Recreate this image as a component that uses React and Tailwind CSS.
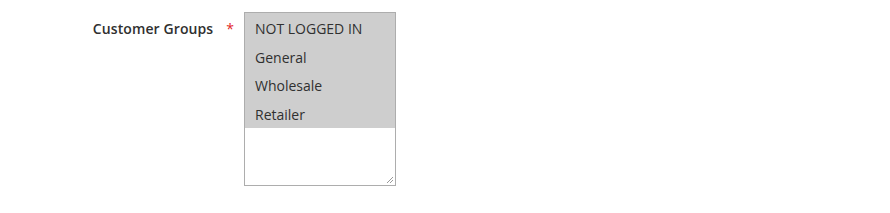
export default function App() {
  const groups = ['NOT LOGGED IN', 'General', 'Wholesale', 'Retailer'];

  return (
    <div className="w-[890px] h-[213px] bg-white pt-3 font-['Open_Sans',sans-serif] text-[14px] text-[#303030]">
      <div className="flex items-start">
        {/* Label */}
        <div className="w-[244px] flex justify-end pr-[10px] pt-[7px]">
          <label className="font-semibold leading-[19px] tracking-[0.1px]">Customer Groups</label>
          <span className="ml-[13px] text-[#e22626] leading-[19px]">*</span>
        </div>

        {/* Multiselect */}
        <div className="relative w-[152px] h-[174px] border border-[#adadad] bg-white">
          {groups.map((g) => (
            <div key={g} className="h-[28.75px] flex items-center pt-[3px] px-[10px] bg-[#cecece] leading-none">
              {g}
            </div>
          ))}
          <svg className="absolute right-[1px] bottom-[1px]" width="9" height="9" viewBox="0 0 9 9">
            <path d="M8 2 L2 8 M8 5 L5 8" stroke="#9a9a9a" strokeWidth="1" />
          </svg>
        </div>
      </div>
    </div>
  );
}
